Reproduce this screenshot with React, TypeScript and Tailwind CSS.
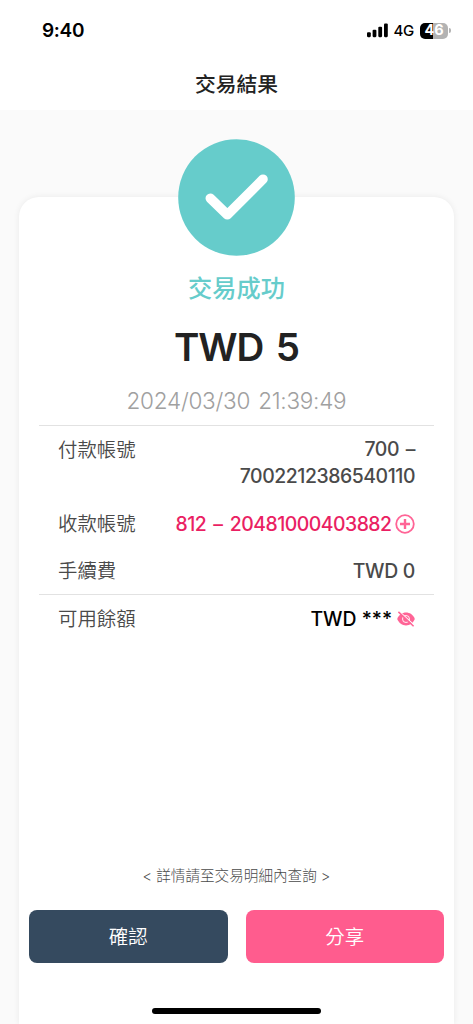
import React, { useState } from 'react';

const SignalIcon = () => (
  <svg width="21" height="15" viewBox="0 0 21 15" fill="black">
    <rect x="0" y="9.2" width="3.8" height="5" rx="1.1" />
    <rect x="5.6" y="6.7" width="3.8" height="7.5" rx="1.1" />
    <rect x="11.3" y="3.7" width="3.8" height="10.5" rx="1.1" />
    <rect x="17" y="0.5" width="3.8" height="13.7" rx="1.1" />
  </svg>
);

const CheckBadge = () => (
  <svg width="117" height="117" viewBox="0 0 117 117" fill="none">
    <circle cx="58.5" cy="58.5" r="58.3" fill="#66cccb" />
    <path d="M32.3 59.3L49.3 75.8L85 40.2" stroke="white" strokeWidth="9.6" strokeLinecap="round" strokeLinejoin="round" />
  </svg>
);

const PlusCircle = () => (
  <svg width="20" height="20" viewBox="0 0 20 20" fill="none" stroke="#ff6496">
    <circle cx="10" cy="10" r="8.8" strokeWidth="1.8" />
    <path d="M10 5V15M5 10H15" strokeWidth="2.4" />
  </svg>
);

const EyeOff = () => (
  <svg width="18" height="16" viewBox="0 0 18 16" fill="none">
    <path d="M0.2 8C2 3.6 5.3 1.6 9 1.6s7 2 8.8 6.4c-1.8 4.4-5.1 6.4-8.8 6.4S2 12.4 0.2 8Z" fill="#ff6496" />
    <circle cx="9" cy="8" r="3.5" stroke="white" strokeWidth="0.9" />
    <path d="M2.9 0.8L17.3 14.2" stroke="white" strokeWidth="1.1" />
    <path d="M1.4 0.9L16.6 15.3" stroke="#ff6496" strokeWidth="1.5" />
  </svg>
);

const StatusBar = () => (
  <div className="flex h-[62px] items-center justify-between pl-[42px] pr-[22.5px] text-black">
    <span className="text-[19px] font-semibold tracking-[-0.3px]">9:40</span>
    <div className="flex items-center pb-px">
      <SignalIcon />
      <span className="ml-[6px] pt-px text-[15px] font-medium tracking-[-0.3px]">4G</span>
      <div className="ml-[6px] flex h-4 w-7 items-center justify-center rounded-[5px] bg-linear-to-r from-black from-46% to-[#b3b3b3] to-46% text-[14.5px] font-bold leading-none text-white">
        46
      </div>
      <div className="ml-px h-[5px] w-[1.5px] rounded-r-full bg-[#b3b3b3]" />
    </div>
  </div>
);

const App = () => {
  const [hidden, setHidden] = useState(true);

  return (
    <div className="flex h-[1024px] w-[473px] flex-col overflow-hidden bg-[#fafafa] font-['Inter','Noto_Sans_CJK_TC',sans-serif] text-[#4a4a4a]">
      {/* Header */}
      <header className="h-[110px] shrink-0 bg-white">
        <StatusBar />
        <h1 className="-mt-px text-center text-[20.8px] font-medium leading-[48px] text-[#222]">交易結果</h1>
      </header>

      {/* Result card */}
      <main className="mx-[19px] mt-[87px] flex flex-1 flex-col rounded-t-[20px] bg-white shadow-[0_0_6px_rgba(0,0,0,0.07)]">
        <div className="-mt-[58px] flex h-[117px] justify-center">
          <CheckBadge />
        </div>
        <p className="mt-[15px] text-center text-[24.2px] font-medium leading-9 text-[#66cccb]">交易成功</p>
        <p className="mt-[16px] text-center text-[38.5px] font-[580] leading-[48px] tracking-[-1.1px] text-[#222] [word-spacing:4px]">TWD 5</p>
        <p className="mt-[14px] text-center text-[22.5px] font-[350] leading-8 tracking-[-0.25px] text-[#a0a0a0] [word-spacing:2px]">2024/03/30 21:39:49</p>

        <div className="mx-5 mt-2 flex flex-col border-y-[1.5px] border-[#e2e2e2] px-[19px] text-[19.4px] leading-7">
          <div className="mt-[10px] flex justify-between">
            <span className="font-[350]">付款帳號</span>
            <span className="w-[177px] text-right font-medium leading-[27px] tracking-[-0.43px] [word-spacing:2px]">700 – 7002212386540110</span>
          </div>
          <div className="mt-[20px] flex justify-between">
            <span className="font-[350]">收款帳號</span>
            <span className="flex items-center whitespace-nowrap font-medium tracking-[-0.5px] text-[#ea1f63] [word-spacing:2.5px]">
              812 – 20481000403882
              <span className="ml-[3.5px]"><PlusCircle /></span>
            </span>
          </div>
          <div className="mt-[19px] mb-[9px] flex justify-between">
            <span className="font-[350]">手續費</span>
            <span className="font-medium tracking-[-0.3px]">TWD 0</span>
          </div>
        </div>
        <div className="mx-[39px] mt-[10px] flex justify-between text-[19.4px] leading-7">
          <span className="font-[350]">可用餘額</span>
          <button className="flex items-center font-medium text-black" onClick={() => setHidden(!hidden)}>
            {hidden ? 'TWD ***' : 'TWD 0'}
            <span className="ml-[5px]"><EyeOff /></span>
          </button>
        </div>

        {/* Footer */}
        <p className="mt-auto text-center text-[14.6px] font-light leading-5 text-[#4a4a4a]">&lt; 詳情請至交易明細內查詢 &gt;</p>
        <div className="mx-[10px] mt-[24px] flex gap-[18px] text-[19.4px] font-[350] text-white">
          <button className="h-[53px] flex-1 rounded-[8px] bg-[#354a5f] pt-0.5">確認</button>
          <button className="h-[53px] flex-1 rounded-[8px] bg-[#ff5c8e] pt-0.5">分享</button>
        </div>
        <div className="mx-auto mt-[45px] mb-[10px] h-[6px] w-[169px] shrink-0 rounded-full bg-black" />
      </main>
    </div>
  );
};

export default App;
